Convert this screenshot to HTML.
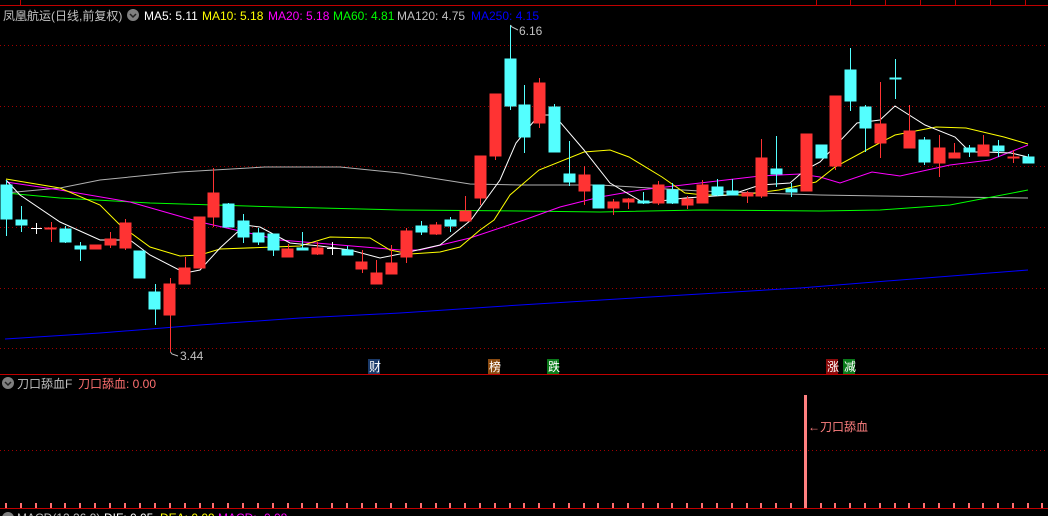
<!DOCTYPE html>
<html><head><meta charset="utf-8"><style>
html,body{margin:0;padding:0;background:#000;width:1048px;height:516px;overflow:hidden}
svg{display:block}
text{font-family:"Liberation Sans","Noto Sans CJK SC",sans-serif;font-size:12px}
</style></head><body>
<svg width="1048" height="516" viewBox="0 0 1048 516" xmlns="http://www.w3.org/2000/svg">
<rect width="1048" height="516" fill="#000"/>
<line x1="0" y1="5.5" x2="1048" y2="5.5" stroke="#c00000" stroke-width="1"/>
<g stroke="#c00000"><line x1="20.5" y1="0" x2="20.5" y2="5"/><line x1="816.5" y1="0" x2="816.5" y2="5"/><line x1="850.5" y1="0" x2="850.5" y2="5"/><line x1="885.5" y1="0" x2="885.5" y2="5"/><line x1="920.5" y1="0" x2="920.5" y2="5"/><line x1="955.5" y1="0" x2="955.5" y2="5"/><line x1="990.5" y1="0" x2="990.5" y2="5"/><line x1="1025.5" y1="0" x2="1025.5" y2="5"/></g>
<g stroke="#a00000" stroke-dasharray="1,3" stroke-width="1">
<line x1="0" y1="45.5" x2="1048" y2="45.5"/><line x1="0" y1="106.5" x2="1048" y2="106.5"/><line x1="0" y1="166.5" x2="1048" y2="166.5"/><line x1="0" y1="227.5" x2="1048" y2="227.5"/><line x1="0" y1="288.5" x2="1048" y2="288.5"/><line x1="0" y1="348.5" x2="1048" y2="348.5"/>
<line x1="0" y1="450.5" x2="1048" y2="450.5"/>
</g>
<text x="3" y="20" fill="#c0c0c0">凤凰航运(日线,前复权)</text>
<circle cx="133" cy="15" r="6" fill="#808080"/><path d="M130 14l3 3 3-3" stroke="#222" stroke-width="1.5" fill="none"/>
<text x="144" y="20" fill="#fff">MA5: 5.11</text>
<text x="202" y="20" fill="#ffff00">MA10: 5.18</text>
<text x="268" y="20" fill="#ff00ff">MA20: 5.18</text>
<text x="333" y="20" fill="#00ff00">MA60: 4.81</text>
<text x="397" y="20" fill="#c0c0c0">MA120: 4.75</text>
<text x="471" y="20" fill="#0000ff">MA250: 4.15</text>
<g fill="none" stroke-width="1">
<polyline stroke="#0000ff" points="5,339 100,333 200,325 300,318 400,313 520,305 650,297 800,288 900,280 1028,270"/>
<polyline stroke="#b0b0b0" points="5,193 60,188 100,180 180,172 265,167 340,167 400,173 470,184 520,185 600,185 700,191 820,195 880,196 950,197 1028,198"/>
<polyline stroke="#00ff00" points="6,193 60,198 150,203 280,207 400,210 520,211 600,212 700,210 820,211 880,210 950,205 1028,190"/>
<polyline stroke="#ff00ff" points="6,182 60,190 130,202 200,222 280,240 400,250 420,250 470,238 524,220 560,207 600,197 640,190 700,183 760,176 800,174 820,177 840,183 872,172 900,176 950,165 990,160 1028,145"/>
<polyline stroke="#ffff00" points="6,179 60,188 100,205 120,225 150,247 180,256 200,255 220,249 300,246 330,237 370,238 390,250 410,254 440,252 460,247 480,230 494,220 510,195 539,170 584,152 610,150 629,157 662,177 685,193 704,195 741,195 779,190 816,182 835,167 872,147 895,135 936,127 966,128 1004,137 1028,144"/>
<polyline stroke="#ffffff" points="6,180 20,195 60,222 100,240 130,240 150,255 185,273 200,270 220,248 245,225 260,227 290,243 320,246 350,250 380,258 400,254 440,245 471,220 500,180 516,143 539,115 554,115 584,150 610,183 644,203 685,198 730,195 760,185 790,183 805,170 820,162 857,123 880,120 895,106 925,125 955,137 970,152 985,152 1011,153 1028,157"/>
</g>
<g stroke-width="1">
<g fill="#54ffff" stroke="#54ffff">
<line x1="6.5" y1="180" x2="6.5" y2="236"/><rect x="1" y="185" width="11" height="34"/>
<line x1="21.5" y1="206" x2="21.5" y2="232"/><rect x="16" y="220" width="11" height="5"/>
<line x1="65.5" y1="226" x2="65.5" y2="243"/><rect x="60" y="229" width="11" height="13"/>
<line x1="80.5" y1="242" x2="80.5" y2="261"/><rect x="75" y="246" width="11" height="3"/>
<rect x="134" y="251" width="11" height="27"/>
<line x1="155.5" y1="284" x2="155.5" y2="325"/><rect x="149" y="292" width="11" height="17"/>
<line x1="228.5" y1="203" x2="228.5" y2="227"/><rect x="223" y="204" width="11" height="23"/>
<line x1="243.5" y1="214" x2="243.5" y2="243"/><rect x="238" y="221" width="11" height="16"/>
<line x1="258.5" y1="228" x2="258.5" y2="245"/><rect x="253" y="233" width="11" height="9"/>
<line x1="273.5" y1="234" x2="273.5" y2="256"/><rect x="268" y="234" width="11" height="16"/>
<line x1="302.5" y1="232" x2="302.5" y2="250"/><rect x="297" y="248" width="11" height="2"/>
<line x1="347.5" y1="246" x2="347.5" y2="255"/><rect x="342" y="250" width="11" height="5"/>
<line x1="421.5" y1="221" x2="421.5" y2="235"/><rect x="416" y="226" width="11" height="6"/>
<line x1="450.5" y1="217" x2="450.5" y2="232"/><rect x="445" y="220" width="11" height="6"/>
<line x1="510.5" y1="25" x2="510.5" y2="110"/><rect x="505" y="59" width="11" height="47"/>
<line x1="524.5" y1="85" x2="524.5" y2="153"/><rect x="519" y="105" width="11" height="32"/>
<line x1="554.5" y1="104" x2="554.5" y2="152"/><rect x="549" y="107" width="11" height="45"/>
<line x1="569.5" y1="141" x2="569.5" y2="186"/><rect x="564" y="174" width="11" height="8"/>
<rect x="593" y="185" width="11" height="23"/>
<line x1="643.5" y1="192" x2="643.5" y2="204"/><rect x="638" y="201" width="11" height="2"/>
<line x1="672.5" y1="183" x2="672.5" y2="204"/><rect x="667" y="190" width="11" height="13"/>
<line x1="717.5" y1="179" x2="717.5" y2="196"/><rect x="712" y="187" width="11" height="8"/>
<line x1="732.5" y1="179" x2="732.5" y2="195"/><rect x="727" y="191" width="11" height="4"/>
<line x1="776.5" y1="136" x2="776.5" y2="187"/><rect x="771" y="169" width="11" height="5"/>
<line x1="791.5" y1="183" x2="791.5" y2="197"/><rect x="786" y="189" width="11" height="3"/>
<rect x="816" y="145" width="11" height="13"/>
<line x1="850.5" y1="48" x2="850.5" y2="111"/><rect x="845" y="70" width="11" height="31"/>
<line x1="865.5" y1="105" x2="865.5" y2="152"/><rect x="860" y="107" width="11" height="21"/>
<line x1="895.5" y1="59" x2="895.5" y2="99"/><rect x="890" y="78" width="11" height="1"/>
<line x1="924.5" y1="137" x2="924.5" y2="165"/><rect x="919" y="140" width="11" height="22"/>
<line x1="969.5" y1="145" x2="969.5" y2="157"/><rect x="964" y="148" width="11" height="4"/>
<line x1="998.5" y1="140" x2="998.5" y2="157"/><rect x="993" y="146" width="11" height="5"/>
<line x1="1028.5" y1="154" x2="1028.5" y2="163"/><rect x="1023" y="157" width="11" height="6"/>
</g>
<g fill="#ff3333" stroke="#ff3333">
<line x1="51.5" y1="222" x2="51.5" y2="242"/><rect x="45" y="228" width="11" height="1"/>
<rect x="90" y="245" width="11" height="4"/>
<line x1="110.5" y1="232" x2="110.5" y2="248"/><rect x="105" y="239" width="11" height="6"/>
<line x1="125.5" y1="219" x2="125.5" y2="250"/><rect x="120" y="223" width="11" height="25"/>
<line x1="170.5" y1="278" x2="170.5" y2="352"/><rect x="164" y="284" width="11" height="31"/>
<line x1="185.5" y1="257" x2="185.5" y2="284"/><rect x="179" y="268" width="11" height="16"/>
<rect x="194" y="217" width="11" height="51"/>
<line x1="213.5" y1="168" x2="213.5" y2="227"/><rect x="208" y="193" width="11" height="24"/>
<line x1="288.5" y1="244" x2="288.5" y2="257"/><rect x="282" y="249" width="11" height="8"/>
<line x1="317.5" y1="242" x2="317.5" y2="255"/><rect x="312" y="248" width="11" height="6"/>
<line x1="362.5" y1="250" x2="362.5" y2="273"/><rect x="356" y="262" width="11" height="7"/>
<line x1="376.5" y1="260" x2="376.5" y2="284"/><rect x="371" y="273" width="11" height="11"/>
<line x1="391.5" y1="245" x2="391.5" y2="274"/><rect x="386" y="263" width="11" height="11"/>
<line x1="406.5" y1="228" x2="406.5" y2="263"/><rect x="401" y="231" width="11" height="26"/>
<line x1="436.5" y1="222" x2="436.5" y2="235"/><rect x="430" y="225" width="11" height="9"/>
<line x1="465.5" y1="196" x2="465.5" y2="221"/><rect x="460" y="211" width="11" height="10"/>
<line x1="480.5" y1="156" x2="480.5" y2="205"/><rect x="475" y="156" width="11" height="42"/>
<line x1="495.5" y1="94" x2="495.5" y2="160"/><rect x="490" y="94" width="11" height="62"/>
<line x1="539.5" y1="78" x2="539.5" y2="128"/><rect x="534" y="83" width="11" height="40"/>
<line x1="584.5" y1="166" x2="584.5" y2="205"/><rect x="579" y="175" width="11" height="16"/>
<line x1="613.5" y1="199" x2="613.5" y2="215"/><rect x="608" y="202" width="11" height="6"/>
<line x1="628.5" y1="198" x2="628.5" y2="209"/><rect x="623" y="199" width="11" height="3"/>
<line x1="658.5" y1="181" x2="658.5" y2="205"/><rect x="653" y="185" width="11" height="18"/>
<line x1="687.5" y1="196" x2="687.5" y2="209"/><rect x="682" y="199" width="11" height="6"/>
<line x1="702.5" y1="180" x2="702.5" y2="203"/><rect x="697" y="185" width="11" height="18"/>
<line x1="747.5" y1="191" x2="747.5" y2="203"/><rect x="742" y="193" width="11" height="3"/>
<line x1="761.5" y1="139" x2="761.5" y2="198"/><rect x="756" y="158" width="11" height="38"/>
<rect x="801" y="134" width="11" height="57"/>
<line x1="835.5" y1="96" x2="835.5" y2="170"/><rect x="830" y="96" width="11" height="70"/>
<line x1="880.5" y1="82" x2="880.5" y2="158"/><rect x="875" y="124" width="11" height="19"/>
<line x1="909.5" y1="105" x2="909.5" y2="148"/><rect x="904" y="131" width="11" height="17"/>
<line x1="939.5" y1="135" x2="939.5" y2="177"/><rect x="934" y="148" width="11" height="15"/>
<line x1="954.5" y1="143" x2="954.5" y2="158"/><rect x="949" y="153" width="11" height="5"/>
<line x1="983.5" y1="135" x2="983.5" y2="156"/><rect x="978" y="145" width="11" height="11"/>
<line x1="1013.5" y1="150" x2="1013.5" y2="163"/><rect x="1008" y="157" width="11" height="1"/>
</g>
<g stroke="#fff"><line x1="31" y1="228.5" x2="42" y2="228.5"/><line x1="36.5" y1="223" x2="36.5" y2="234"/>
<line x1="327" y1="248.5" x2="338" y2="248.5"/><line x1="332.5" y1="242" x2="332.5" y2="255"/></g>
</g>
<g stroke="#c0c0c0" fill="none"><path d="M510.5 25 L512 27 L518 30"/><path d="M170.5 352 L172 354 L178 356"/></g>
<text x="519" y="35" fill="#c0c0c0" font-size="11">6.16</text>
<text x="180" y="360" fill="#c0c0c0" font-size="11">3.44</text>
<rect x="368" y="359" width="12" height="15" fill="#1a3a6a"/><text x="369" y="371" fill="#fff" font-size="11">财</text>
<rect x="488" y="359" width="12" height="15" fill="#8a4a10"/><text x="489" y="371" fill="#fff" font-size="11">榜</text>
<rect x="547" y="359" width="12" height="15" fill="#0a7a1a"/><text x="548" y="371" fill="#fff" font-size="11">跌</text>
<rect x="826" y="359" width="12" height="15" fill="#8a0a0a"/><text x="827" y="371" fill="#fff" font-size="11">涨</text>
<rect x="843" y="359" width="12" height="15" fill="#0a7a1a"/><text x="844" y="371" fill="#fff" font-size="11">减</text>
<line x1="0" y1="374.5" x2="1048" y2="374.5" stroke="#c00000"/>
<circle cx="8" cy="383" r="6" fill="#808080"/><path d="M5 382l3 3 3-3" stroke="#222" stroke-width="1.5" fill="none"/>
<text x="17" y="388" fill="#c0c0c0">刀口舔血F</text>
<text x="78" y="388" fill="#ff7070">刀口舔血: 0.00</text>
<rect x="804" y="395" width="3" height="113" fill="#ff8080"/>
<text x="808" y="431" fill="#ff8080">←刀口舔血</text>
<line x1="0" y1="508.5" x2="1048" y2="508.5" stroke="#c00000"/>
<g stroke="#ff7070" stroke-width="2">
<path d="M6 503v5M21 503v5M36 503v5M51 503v5M65 503v5M80 503v5M95 503v5M110 503v5M125 503v5M140 503v5M155 503v5M170 503v5M185 503v5M200 503v5M213 503v5M228 503v5M243 503v5M258 503v5M273 503v5M288 503v5M302 503v5M317 503v5M332 503v5M347 503v5M362 503v5M376 503v5M391 503v5M406 503v5M421 503v5M436 503v5M450 503v5M465 503v5M480 503v5M495 503v5M510 503v5M524 503v5M539 503v5M554 503v5M569 503v5M584 503v5M598 503v5M613 503v5M628 503v5M643 503v5M658 503v5M672 503v5M687 503v5M702 503v5M717 503v5M732 503v5M747 503v5M761 503v5M776 503v5M791 503v5M821 503v5M835 503v5M850 503v5M865 503v5M880 503v5M895 503v5M909 503v5M924 503v5M939 503v5M954 503v5M969 503v5M983 503v5M998 503v5M1013 503v5M1028 503v5M1042 503v5"/>
</g>
<circle cx="8" cy="518" r="6" fill="#808080"/>
<text x="17" y="522" fill="#c0c0c0">MACD(12,26,9)</text>
<text x="104" y="522" fill="#fff">DIF: 0.05</text>
<text x="160" y="522" fill="#ffff00">DEA: 0.09</text>
<text x="218" y="522" fill="#ff00ff">MACD: -0.08</text>
</svg>
</body></html>
